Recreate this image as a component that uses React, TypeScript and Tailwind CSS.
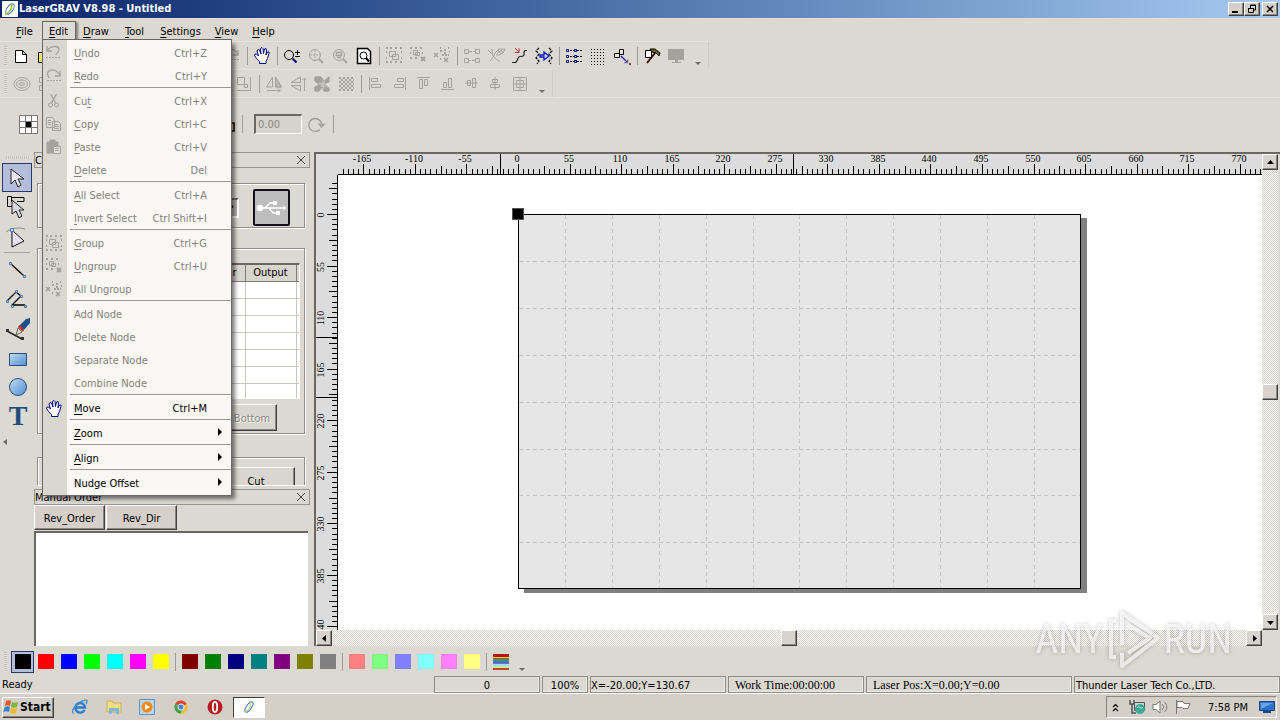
import type { ReactNode } from 'react';
import clsx from 'clsx';

const GRAY = '#a5a19b';
const NAVY = '#000080';

const raised =
  'border border-t-white border-l-white border-r-[#404040] border-b-[#404040] shadow-[inset_-1px_-1px_0_#8a867f]';
const track =
  'bg-[repeating-conic-gradient(#ffffff_0_25%,#d4d0c8_0_50%)] bg-[length:2px_2px]';

const Icon = ({ children, className }: { children: ReactNode; className?: string }) => (
  <svg
    viewBox="0 0 20 20"
    fill="none"
    stroke={GRAY}
    className={clsx('w-5 h-5 shrink-0', className)}
    aria-hidden="true"
  >
    {children}
  </svg>
);

const cross = (x: number, y: number) => `M${x} ${y}l4 4M${x + 4} ${y}l-4 4`;

const icons: Record<string, ReactNode> = {
  new: (
    <Icon>
      <path d="M3.500 4.500h7l4 4v8h-11zM10.500 4.500v4h4" stroke="#000" fill="#fff" />
    </Icon>
  ),
  open: (
    <Icon>
      <path d="M2.500 16.500v-10h4l1 2h8v8z" stroke="#000" fill="#f0e070" />
    </Icon>
  ),
  save: (
    <Icon>
      <path d="M3.500 3.500h13v13h-13zM6.500 3.500v5h7v-5M6.500 16.500v-5h7v5" />
    </Icon>
  ),
  undo: (
    <Icon>
      <path d="M3 2v5h5M3 7c3-5 11-6 12-2 0 4-3 4-3 6" strokeWidth="1.300" />
      <path d="M2 13.500h14" strokeDasharray="2 1" />
    </Icon>
  ),
  redo: (
    <Icon>
      <path d="M16 4v5h-5M16 9c-2-6-9-8-12-4-2 4 1 4 1 6" strokeWidth="1.300" />
      <path d="M3 13.500h14" strokeDasharray="2 1" />
    </Icon>
  ),
  cut: (
    <Icon>
      <path d="M6.500 2l5 9M12.500 2l-5 9" strokeWidth="1.300" />
      <circle cx="6.500" cy="13" r="2" />
      <circle cx="12.500" cy="13" r="2" />
    </Icon>
  ),
  copy: (
    <Icon>
      <path d="M2.500 2.500h6l2 2v8h-8zM8.500 6.500h6l2 2v7h-8zM4 5.500h3M4 7.500h3M4 9.500h3M10 9.500h4M10 11.500h5M10 13.500h5" />
    </Icon>
  ),
  paste: (
    <Icon>
      <path d="M3 4h3V2h5v2h3v11H3z" fill={GRAY} />
      <path d="M9.500 8.500h7v7h-7zM11 10.500h4M11 12.500h4" fill="#e2dfda" />
    </Icon>
  ),
  hand: (
    <Icon>
      <path
        d="M7.500 17.500v-2l-3-3-2-3 .5-1.500h1.500l2 2-1.500-5 1-1.500 1.500.5 1.500 4-.5-5.500 1.500-1 1 1 .5 5 1-4.500 1.500-.5.5 1.500-.5 5 1.500-3h1.500v1.500l-1.500 5-1.500 3v2z"
        fill="#fff"
        stroke={NAVY}
      />
    </Icon>
  ),
  zoom: (
    <Icon>
      <circle cx="7" cy="9" r="4.500" stroke="#000" />
      <path d="M10.500 12.500l4 4" stroke={NAVY} strokeWidth="2" />
      <path d="M13 6.500h5M15.500 4v5M13 10.500h5" stroke="#000" />
    </Icon>
  ),
  zoomAll: (
    <Icon>
      <circle cx="9" cy="9" r="5.500" />
      <path d="M13 13l4 4" strokeWidth="2" />
      <path d="M9 4v10M4 9h10" strokeDasharray="2 1" />
    </Icon>
  ),
  zoomSel: (
    <Icon>
      <circle cx="9" cy="9" r="5.500" />
      <path d="M13 13l4 4" strokeWidth="2" />
      <path d="M6.500 6.500h5v3h-5zM7 11.500h4" strokeWidth="1.500" />
    </Icon>
  ),
  zoomPage: (
    <Icon>
      <path d="M3.500 2.500h10l3 3v12h-13z" fill="#fff" stroke="#000" strokeWidth="1.500" />
      <circle cx="9.500" cy="9.500" r="3.500" stroke="#000" />
      <path d="M12 12l3 3.500" stroke="#000" strokeWidth="2" />
    </Icon>
  ),
  group: (
    <Icon>
      <path d="M2 2h2M6 2h2M11 2h2M16 2h2M2 16h2M6 16h2M11 16h2M16 16h2M2 6h1M2 12h1M17 6h1M17 12h1" strokeWidth="2" />
      <path d="M5.500 5.500h6v5h-6zM8.500 8.500h6v5h-6z" />
    </Icon>
  ),
  ungroup: (
    <Icon>
      <path d="M2 2h2M7 2h2M12 2h2M2 7h1M2 12h2M7 12h2M14 7h1" strokeWidth="2" />
      <path d="M5.500 4.500h4v4h-4zM7.500 6.500h4v3h-4z" />
      <path d={cross(13, 11)} strokeWidth="2" />
    </Icon>
  ),
  ungroupAll: (
    <Icon>
      <path d={cross(2, 7) + cross(12, 12)} strokeWidth="1.500" />
      <path d="M8 5h3M13 3v5M10 9h7M8 2h1M16 2h1M8 13h1M17 6h1" strokeWidth="2" strokeDasharray="2 1" />
    </Icon>
  ),
  nodes: (
    <Icon>
      <path d="M2.500 3.500h4v4h-4zM13.500 3.500h4v4h-4zM2.500 12.500h4v4h-4zM13.500 12.500h4v4h-4zM7 5.500h3M11 5.500h2M7 14.500h2M10 14.500h3" />
    </Icon>
  ),
  hatch: (
    <Icon>
      <path d="M2 4l4 4M6 3c0 3 0 6 2 8s5 4 6 5M4 15c3-3 4-6 6-9" />
      <path d="M10 6l3-3h6l-2 4-4 2h-3M12 4l3 4M15 4l2 3M11 7l5-3" />
    </Icon>
  ),
  smooth: (
    <Icon>
      <path d="M2 16.500h3c3 0 2-6 5-6 5 0 4-2 4-4 0-2 1-2 3-2" stroke="#222" strokeWidth="1.200" />
      <path d="M5 2l4 4M9 2.500V6.500H5" stroke="#c81020" />
    </Icon>
  ),
  convert: (
    <Icon>
      <path d="M5 2L2 5l3 3-3 4 3 3-2 3M15 2l3 3-3 3 3 4-3 3 2 3" stroke="#000" strokeWidth="1.200" strokeDasharray="3 1" />
      <path d="M6 9h4V6l5 4-5 4v-3H6z" fill="#cfd6ff" stroke="#1010c0" strokeWidth="1.300" />
    </Icon>
  ),
  list: (
    <Icon>
      <path d="M2.500 3.500h2v2h-2zM2.500 9.500h2v2h-2zM2.500 14.500h2v2h-2zM10.500 3.500h2v2h-2zM10.500 9.500h2v2h-2zM10.500 14.500h2v2h-2z" stroke={NAVY} />
      <path d="M6 4.500h4M13 4.500h5M6 10.500h4M13 10.500h5M6 15.500h4M13 15.500h5" stroke="#000" strokeDasharray="2 1" />
    </Icon>
  ),
  dots: (
    <Icon>
      <path
        d="M3 3.500h15M3 6.500h15M3 9.500h15M3 12.500h15M3 15.500h15M3 18.500h15"
        stroke="#000"
        strokeDasharray="1 2"
      />
    </Icon>
  ),
  arrange: (
    <Icon>
      <path d="M7.500 3.500h4v5h-4zM2.500 7.500h5v4h-5z" stroke="#000" fill="#e8e6e2" />
      <path d="M9 10l6 6" stroke="#1010c0" strokeWidth="1.300" />
      <path d="M16 13v4h-4z" fill="#1010c0" />
      <path d="M17 18h2" stroke="#c01030" strokeWidth="2" />
    </Icon>
  ),
  hammer: (
    <Icon>
      <path d="M3.500 4.500h6v7h-6z" fill="#fff" stroke="#000" />
      <path d="M13 7L5 17" stroke="#3a0a0a" strokeWidth="2" />
      <path d="M8 3h5l5 4-1 3-3-3-4-1z" fill="#6a6420" stroke="#000" />
    </Icon>
  ),
  monitor: (
    <Icon>
      <path d="M2 3h16v11H2zM9 14h3v2h3v1H6v-1h3z" fill={GRAY} stroke="none" />
    </Icon>
  ),
  rings: (
    <Icon>
      <ellipse cx="10" cy="10" rx="8" ry="6.500" />
      <ellipse cx="10" cy="10" rx="5.500" ry="4" />
      <ellipse cx="10" cy="10" rx="2.500" ry="1.500" />
    </Icon>
  ),
  boxes: (
    <Icon>
      <path d="M3.500 3.500h6v5h-6zM3.500 11.500h6v5h-6zM12.500 6.500h5v7h-5z" />
    </Icon>
  ),
  scale: (
    <Icon>
      <path d="M3.500 3.500h7v7h-7zM16.500 3v14M3 16.500h13M10.500 10.500h3v3h-3z" />
    </Icon>
  ),
  flipH: (
    <Icon>
      <path d="M8.500 3v10h-6zM11.500 3v10h6zM3 16.500h13M14 14.500l2 2-2 2" />
      <path d="M11.500 3v10h6z" fill="#bab6b0" />
    </Icon>
  ),
  flipV: (
    <Icon>
      <path d="M12.500 3v5.500H3zM12.500 17v-5.500H3zM16.500 17V4M14.500 6l2-2 2 2" />
    </Icon>
  ),
  invert: (
    <Icon>
      <path d="M3 3h6l3 4 5-4v4l-5 3 5 4v3h-5l-2-4-3 4H3v-4l4-2-4-4z" fill="#c4c0ba" />
      <path d="M3 3h6l1 5-5 1-2-2zM17 3v5l-4 1 1-3zM3 17v-4l5-2 1 3-2 3zM17 17h-5l1-4 4 2z" fill={GRAY} />
    </Icon>
  ),
  checker: (
    <Icon>
      <path d="M3 4h15M3 8h15M3 12h15M3 16h15" strokeWidth="2" strokeDasharray="2 2" />
      <path d="M5 6h13M5 10h13M5 14h13" strokeWidth="2" strokeDasharray="2 2" />
    </Icon>
  ),
  alignL: (
    <Icon>
      <path d="M3.500 3v13M5.500 4.500h6v3h-6zM5.500 10.500h9v3h-9z" />
    </Icon>
  ),
  alignR: (
    <Icon>
      <path d="M15.500 3v13M7.500 4.500h6v3h-6zM4.500 10.500h9v3h-9z" />
    </Icon>
  ),
  alignT: (
    <Icon>
      <path d="M3 3.500h13M5.500 5.500h3v9h-3zM10.500 5.500h3v6h-3z" />
    </Icon>
  ),
  alignB: (
    <Icon>
      <path d="M3 15.500h13M5.500 8.500h3v5h-3zM10.500 4.500h3v9h-3z" />
    </Icon>
  ),
  centerH: (
    <Icon>
      <path d="M3 9h13M5.500 6.500h3v5h-3zM10.500 4.500h3v9h-3z" fill="#dcd8d2" />
    </Icon>
  ),
  centerV: (
    <Icon>
      <path d="M9 3v13M6.500 5.500h5v3h-5zM4.500 10.500h9v3h-9z" fill="#dcd8d2" />
    </Icon>
  ),
  table: (
    <Icon>
      <path d="M3.500 3.500h13v13h-13zM3.500 10h13M10 3.500v13M6.500 6.500h7v7h-7z" />
    </Icon>
  ),
  lock: (
    <Icon>
      <path d="M6 9V6c0-4 7-4 7 0v3h5v8H4V9z" stroke="#000" strokeWidth="1.500" fill="#f0e070" />
    </Icon>
  ),
  rotate: (
    <Icon>
      <path d="M14 15.500A6.500 6.500 0 1 1 15.500 9" strokeWidth="1.500" />
      <path d="M11.500 9.500h8l-4 4.500z" fill={GRAY} stroke="none" />
    </Icon>
  ),
};

const menus = [
  { label: 'File', width: 'w-[33px]' },
  { label: 'Edit', width: 'w-[34px]' },
  { label: 'Draw', width: 'w-[40px]' },
  { label: 'Tool', width: 'w-[37px]' },
  { label: 'Settings', width: 'w-[55px]' },
  { label: 'View', width: 'w-[37px]' },
  { label: 'Help', width: 'w-[37px]' },
];

type MenuEntry = {
  label: string;
  mnemonic?: boolean;
  keys?: string;
  icon?: string;
  enabled?: boolean;
  submenu?: boolean;
};

const editMenu: MenuEntry[][] = [
  [
    { label: 'Undo', mnemonic: true, keys: 'Ctrl+Z', icon: 'undo' },
    { label: 'Redo', mnemonic: true, keys: 'Ctrl+Y', icon: 'redo' },
  ],
  [
    { label: 'Cut', keys: 'Ctrl+X', icon: 'cut' },
    { label: 'Copy', mnemonic: true, keys: 'Ctrl+C', icon: 'copy' },
    { label: 'Paste', mnemonic: true, keys: 'Ctrl+V', icon: 'paste' },
    { label: 'Delete', mnemonic: true, keys: 'Del' },
  ],
  [
    { label: 'All Select', mnemonic: true, keys: 'Ctrl+A' },
    { label: 'Invert Select', mnemonic: true, keys: 'Ctrl Shift+I' },
  ],
  [
    { label: 'Group', mnemonic: true, keys: 'Ctrl+G', icon: 'group' },
    { label: 'Ungroup', mnemonic: true, keys: 'Ctrl+U', icon: 'ungroup' },
    { label: 'All Ungroup', icon: 'ungroupAll' },
  ],
  [{ label: 'Add Node' }, { label: 'Delete Node' }, { label: 'Separate Node' }, { label: 'Combine Node' }],
  [{ label: 'Move', mnemonic: true, keys: 'Ctrl+M', icon: 'hand', enabled: true }],
  [{ label: 'Zoom', mnemonic: true, enabled: true, submenu: true }],
  [{ label: 'Align', mnemonic: true, enabled: true, submenu: true }],
  [{ label: 'Nudge Offset', enabled: true, submenu: true }],
];

// '|' is a separator
const standardBar = [
  'new', 'open', 'save', '|', 'cut', 'copy', 'paste', '|', 'boxes', '|', 'undo', 'redo', '|',
  'hand', '|', 'zoom', 'zoomAll', 'zoomSel', 'zoomPage', '|', 'group', 'ungroup', 'ungroupAll', '|',
  'nodes', 'hatch', 'smooth', 'convert', '|', 'list', 'dots', 'arrange', '|', 'hammer', 'monitor',
];

const arrangeBar = [
  'rings', 'boxes', 'group', 'ungroup', 'nodes', '|', 'rings', 'boxes', 'table', 'hatch', 'scale', '|',
  'flipH', 'flipV', 'invert', 'checker', '|',
  'alignL', 'alignR', 'alignT', 'alignB', 'centerH', 'centerV', 'table',
];

const palette = [
  ['bg-black', 'bg-[#ff0000]', 'bg-[#0000ff]', 'bg-[#00ff00]', 'bg-[#00ffff]', 'bg-[#ff00ff]', 'bg-[#ffff00]'],
  ['bg-[#800000]', 'bg-[#008000]', 'bg-[#000080]', 'bg-[#008080]', 'bg-[#800080]', 'bg-[#808000]', 'bg-[#808080]'],
  ['bg-[#ff8080]', 'bg-[#80ff80]', 'bg-[#8080ff]', 'bg-[#80ffff]', 'bg-[#ff80ff]', 'bg-[#ffff80]'],
];

const Grip = () => (
  <span className="w-[3px] h-5 ml-1 mr-[3px] shrink-0 bg-[repeating-linear-gradient(#c4c0b9_0_1px,#e6e3de_1px_2px)]" />
);

const Separator = () => (
  <span className="w-[6px] h-[18px] flex justify-center shrink-0">
    <span className="w-px bg-[#a09c95]" />
  </span>
);

const Overflow = () => (
  <span className="w-5 self-end pb-1 flex justify-center">
    <svg viewBox="0 0 6 3" className="w-[6px] h-[3px]" aria-hidden="true">
      <path d="M0 0h6L3 3z" fill="#6f6b66" />
    </svg>
  </span>
);

const ToolBar = ({ items, label }: { items: string[]; label: string }) => (
  <div
    role="toolbar"
    aria-label={label}
    className="h-7 self-start flex items-center border-t border-r border-t-[#e6e3df] border-r-[#d0ccc6]"
  >
    <Grip />
    {items.map((name, i) =>
      name === '|' ? (
        <Separator key={i} />
      ) : (
        <button key={i} aria-label={name} className="w-6 h-6 flex items-center justify-center">
          {icons[name]}
        </button>
      )
    )}
    <Overflow />
  </div>
);

const Mnemonic = ({ text, at = 0 }: { text: string; at?: number }) => (
  <span>
    {text.slice(0, at)}
    <span className="underline underline-offset-2">{text[at]}</span>
    {text.slice(at + 1)}
  </span>
);

const EditMenu = () => (
  <div
    role="menu"
    aria-label="Edit"
    className="absolute z-10 left-0 top-[18px] w-[190px] py-px border border-[#6b6763] bg-[linear-gradient(90deg,#dad6d0_24px,#faf7f5_24px)] shadow-[4px_4px_4px_-1px_rgba(0,0,0,0.5)]"
  >
    {editMenu.map((section, s) => (
      <div key={s}>
        {s > 0 && <div className="h-[2px] ml-[27px] border-t border-[#9d9a95]" />}
        {section.map((item) => (
          <button
            key={item.label}
            role="menuitem"
            disabled={!item.enabled}
            className={clsx(
              'w-full h-[23px] pt-[2px] pr-6 flex items-center relative text-left',
              item.enabled ? 'text-black' : 'text-[#85827e]'
            )}
          >
            <span className="w-[31px] pl-px shrink-0">{item.icon && icons[item.icon]}</span>
            <span className="flex-1">
              {item.label === 'Cut' ? (
                <Mnemonic text="Cut" at={2} />
              ) : item.mnemonic ? (
                <Mnemonic text={item.label} />
              ) : (
                item.label
              )}
            </span>
            {item.keys}
            {item.submenu && (
              <svg viewBox="0 0 4 8" className="absolute right-[9px] top-[7px] w-1 h-2" aria-hidden="true">
                <path d="M0 0l4 4-4 4z" />
              </svg>
            )}
          </button>
        ))}
      </div>
    ))}
  </div>
);

const MenuBar = () => (
  <nav className="h-5 pl-2 flex items-stretch">
    {menus.map(({ label, width }) => (
      <div key={label} className={clsx('relative', width, label === 'File' && 'mr-px')}>
        <button
          className={clsx(
            'w-full h-full',
            label === 'Edit'
              ? 'pr-px border border-b-0 border-[#6b6763] bg-[#dedad5] shadow-[2px_1px_2px_rgba(0,0,0,0.4)]'
              : 'pt-px'
          )}
        >
          <Mnemonic text={label} />
        </button>
        {label === 'Edit' && <EditMenu />}
      </div>
    ))}
  </nav>
);

const TitleBar = () => {
  const button = clsx('h-[14px] bg-[#d4d0c8] flex items-center justify-center', raised);
  return (
    <header className="h-[18px] px-[2px] flex items-center bg-linear-to-r from-[#0a246a] to-[#a6caf0] text-white font-bold">
      <svg viewBox="0 0 16 16" className="w-4 h-4 mr-px bg-white" aria-hidden="true">
        <ellipse cx="8" cy="8" rx="3" ry="6" transform="rotate(35 8 8)" fill="none" stroke="#2b6fd0" />
        <path d="M3 13C8 12 10 8 10 2" fill="none" stroke="#9ac83a" strokeWidth="1.500" />
      </svg>
      <h1 className="flex-1 leading-4">LaserGRAV V8.98 - Untitled</h1>
      <button aria-label="Minimize" className={clsx('w-4', button)}>
        <svg viewBox="0 0 10 10" className="w-[10px] h-[10px]">
          <path d="M1 8h6" stroke="#000" strokeWidth="2" />
        </svg>
      </button>
      <button aria-label="Restore" className={clsx('w-4', button)}>
        <svg viewBox="0 0 10 10" className="w-[10px] h-[10px]" fill="none" stroke="#000">
          <path d="M3.500 4V1h5v5H6M3 1.500h6M1 4.500h5.500M1.500 4v4.500h5V4" />
        </svg>
      </button>
      <button aria-label="Close" className={clsx('w-4 ml-[2px]', button)}>
        <svg viewBox="0 0 10 10" className="w-[10px] h-[10px]">
          <path d="M2 2l6 6M8 2L2 8" stroke="#000" strokeWidth="1.500" />
        </svg>
      </button>
    </header>
  );
};

const tools: { name: string; art: ReactNode }[] = [
  {
    name: 'Select',
    art: <path d="M7 4v15l4-4 3 7 3-2-3-6h6z" fill="#e8e8f4" stroke="#222" />,
  },
  {
    name: 'Node select',
    art: (
      <>
        <path d="M8 12.500H3.500v-10h4v5M8 3.500h12v4h-7" fill="none" stroke="#000" />
        <path d="M8 6v14l4-3 3 7 3-2-3-6h5z" fill="#d8d8e4" stroke="#222" />
      </>
    ),
  },
  {
    name: 'Shape edit',
    art: (
      <>
        <path d="M2 8c5-4 13-5 19-3" fill="none" stroke="#8a8a92" />
        <path d="M8 6v17l12-6z" fill="#e4e4f2" stroke="#111" />
        <path d="M6.500 4.500h3v3h-3z" fill="#cfe0f6" stroke="#4b7cc0" />
      </>
    ),
  },
  {
    name: 'Line',
    art: (
      <>
        <path d="M7 7l13 12" stroke="#000" strokeWidth="1.300" />
        <path d="M5.500 5.500h2v2h-2zM19.500 18.500h2v2h-2z" fill="#dcecff" stroke="#4b7cc0" />
      </>
    ),
  },
  {
    name: 'Polyline',
    art: (
      <>
        <path d="M3 14L12 5l5 4-9 9h13" fill="none" stroke="#000" strokeWidth="1.300" />
        <path d="M2.500 13.500h2v2h-2zM11.500 3.500h2v2h-2zM16.500 8.500h2v2h-2zM7.500 18.500h2v2h-2zM20.500 18.500h2v2h-2z" fill="#dcecff" stroke="#4b7cc0" />
      </>
    ),
  },
  {
    name: 'Pen',
    art: (
      <>
        <path d="M3 14l15 8" stroke="#222" strokeWidth="1.500" />
        <path d="M2 12h3v3H2zM17 20h3v3h-3z" fill="#333" />
        <path d="M12 18l2-7 4 4z" fill="#f0d8c8" stroke="#666" />
        <path d="M14 10l8-8 4-1v5l-7 8z" fill="#1d4f8c" />
        <path d="M14 10l5 5 1-3-4-4z" fill="#c03828" />
      </>
    ),
  },
  {
    name: 'Rectangle',
    art: (
      <>
        <defs>
          <linearGradient id="blue" x1="0" y1="0" x2="1" y2="1">
            <stop offset="0" stopColor="#c2dcf6" />
            <stop offset="1" stopColor="#4f8fd0" />
          </linearGradient>
        </defs>
        <path d="M5.500 7.500h17v12h-17z" fill="url(#blue)" stroke="#2a4f80" />
      </>
    ),
  },
  { name: 'Ellipse', art: <circle cx="14" cy="13" r="8.500" fill="url(#blue)" stroke="#2a4f80" /> },
  {
    name: 'Text',
    art: (
      <text x="14" y="23" textAnchor="middle" fontSize="28" fontWeight="bold" fontFamily="Liberation Serif, serif" fill="#1c4f80">
        T
      </text>
    ),
  },
];

const ToolBox = () => (
  <aside className="w-[34px] shrink-0 pt-1 pl-[2px] flex flex-col">
    <span className="h-[3px] w-6 ml-1 mb-1 bg-[repeating-linear-gradient(90deg,#c4c0b9_0_1px,#e6e3de_1px_2px)]" />
    {tools.map(({ name, art }, i) => (
      <div key={name}>
        {i === 3 && <div className="h-px w-[26px] ml-[2px] mb-[2px] bg-[#a8a49e]" />}
        <button
          aria-label={name}
          className={clsx(
            'w-[30px] flex items-center justify-center',
            i === 0 ? 'h-[29px] border border-[#26386e] bg-[#b4bedb]' : i < 6 ? 'h-[30px]' : 'h-7'
          )}
        >
          <svg viewBox="0 0 26 26" className="w-[26px] h-[26px] overflow-visible" aria-hidden="true">
            {art}
          </svg>
        </button>
      </div>
    ))}
    <svg viewBox="0 0 4 6" className="w-1 h-[6px] mt-[10px] ml-px" aria-hidden="true">
      <path d="M4 0v6L0 3z" fill="#6f6b66" />
    </svg>
  </aside>
);

const PanelTitle = ({ title }: { title: string }) => (
  <div className="h-4 shrink-0 mr-1 flex items-center justify-between border border-[#98948e] leading-4">
    <span className="pt-px">{title}</span>
    <button aria-label={`Close ${title}`} className="w-4 flex justify-center">
      <svg viewBox="0 0 8 8" className="w-2 h-2">
        <path d="M0 0l8 8M8 0L0 8" stroke="#444" />
      </svg>
    </button>
  </div>
);

const groupBox = 'ml-[3px] mr-[9px] border border-[#918d87] shadow-[inset_1px_1px_0_#fff,1px_1px_0_#fff]';

const layerRows = ['a', 'b', 'c', 'd', 'e', 'f', 'g'];

const ControlPanel = () => (
  <section className="w-[280px] shrink-0 flex flex-col">
    <PanelTitle title="Control" />
    <div className={clsx('mt-[15px] h-[45px] pt-1 pr-[14px] flex items-center justify-end gap-[14px]', groupBox)}>
      <select aria-label="Device" className="w-10 h-5 bg-[#bdb9b3] border-2 border-[#6f6b66] border-r-white border-b-white" />
      <button aria-label="USB" className="w-[37px] h-[37px] border-2 border-[#10101c] rounded-[2px] bg-[#bdbdbd] flex items-center justify-center">
        <svg viewBox="0 0 32 16" className="w-8 h-4" fill="none" stroke="#fff" strokeWidth="1.500">
          <path d="M3 8h25M9 8l5-5h4M13 8l4 5h4" />
          <circle cx="4" cy="8" r="2.500" fill="#fff" />
          <circle cx="19" cy="3" r="1.500" fill="#fff" />
          <path d="M20 11h4v4h-4zM27 6l4 2-4 2z" fill="#fff" stroke="none" />
        </svg>
      </button>
    </div>
    <div className={clsx('mt-5 h-[186px] pt-[14px] px-1', groupBox)}>
      <div className="h-[136px] border-t-2 border-l-2 border-t-[#6b6763] border-l-[#6b6763] border-r border-b border-r-white border-b-white bg-white overflow-hidden">
        <table className="w-full table-fixed border-collapse">
          <thead>
            <tr className="h-4 bg-[#d9d5cf] leading-4">
              <th className="w-[70px] p-0 border-r border-b border-[#807c76]" />
              <th className="w-[70px] p-0 border-r border-b border-[#807c76]" />
              <th className="p-0 pr-2 font-normal text-right border-r border-b border-[#807c76]">Power</th>
              <th className="w-[51px] p-0 font-normal border-r border-b border-[#807c76]">Output</th>
              <th className="w-[3px] p-0 border-b border-[#807c76]" />
            </tr>
          </thead>
          <tbody>
            {layerRows.map((row) => (
              <tr key={row} className="h-[17px]">
                <td className="p-0 border-r border-b border-[#c9c5bf]" />
                <td className="p-0 border-r border-b border-[#c9c5bf]" />
                <td className="p-0 border-r border-b border-[#c9c5bf]" />
                <td className="p-0 border-r border-b border-[#c9c5bf]" />
                <td className="p-0 border-b border-[#c9c5bf]" />
              </tr>
            ))}
          </tbody>
        </table>
      </div>
      <div className="mt-[5px] pr-[23px] flex justify-end">
        <button disabled className={clsx('w-[50px] h-[27px] pt-[2px] bg-[#d9d5cf] text-[#8f8b86] [text-shadow:1px_1px_0_#fff]', raised)}>
          Bottom
        </button>
      </div>
    </div>
    <div className={clsx('mt-[23px] h-7 pt-[9px] pr-[9px] flex justify-end overflow-hidden border-b-0', groupBox)}>
      <button className={clsx('w-[78px] h-[27px] pt-[2px] shrink-0 bg-[#d9d5cf]', raised)}>Cut</button>
    </div>
    <div className="mt-1 flex flex-col flex-1">
      <PanelTitle title="Manual Order" />
      <div className="flex gap-px">
        <button className={clsx('w-[71px] h-[25px] pt-[2px] bg-[#d6cfca]', raised)}>Rev_Order</button>
        <button className={clsx('w-[71px] h-[25px] pt-[2px] bg-[#d6cfca]', raised)}>Rev_Dir</button>
      </div>
      <div className="flex-1 min-h-24 mt-px mr-[6px] bg-white border-t-2 border-l-2 border-[#6b6763]" />
    </div>
  </section>
);

// pixels between two small ticks; ten of them make one 55 mm step
const TICK = 5.155;

const Ruler = ({ vertical, zero, marks }: { vertical?: boolean; zero: number; marks: number[] }) => {
  const length = vertical ? window.innerHeight - 264 : window.innerWidth - 356;
  const count = Math.floor(length / TICK) + 1;
  const ticks = Array.from({ length: count }, (_, i) => i - Math.floor((zero - 3) / TICK)).filter(
    (i) => zero + i * TICK < length
  );
  const edge = vertical ? 22 : 21;
  const size = (i: number) => (i % 10 === 0 ? 11 : i % 5 === 0 ? 9 : 6);
  return (
    <svg
      className={clsx('bg-[#dcdcdc] overflow-hidden', vertical ? 'w-[22px] shrink-0' : 'flex-1 min-w-0 h-[21px]')}
      shapeRendering="crispEdges"
      role="img"
      aria-label={vertical ? 'Vertical ruler' : 'Horizontal ruler'}
    >
      {ticks.map((i) => {
        const p = Math.round(zero + i * TICK);
        return vertical ? (
          <rect key={i} x={edge - size(i)} y={p} width={size(i)} height="1" />
        ) : (
          <rect key={i} x={p} y={edge - size(i)} width="1" height={size(i)} />
        );
      })}
      {ticks
        .filter((i) => i % 10 === 0)
        .map((i) => {
          const p = Math.round(zero + i * TICK);
          return (
            <text
              key={i}
              x={vertical ? 0 : p - 1}
              y={vertical ? 0 : 8}
              transform={vertical ? `translate(8 ${p + 1}) rotate(-90)` : undefined}
              textAnchor="middle"
              fontSize="10"
              fontFamily="Liberation Serif, serif"
            >
              {(i / 10) * 55}
            </text>
          );
        })}
      {marks.map((m) =>
        vertical ? (
          <rect key={m} x="0" y={m} width="22" height="1" />
        ) : (
          <rect key={m} x={m} y="0" width="1" height="21" />
        )
      )}
      {vertical ? (
        <rect x="21" y="0" width="1" height="100%" />
      ) : (
        <rect x="0" y="20" width="100%" height="1" />
      )}
    </svg>
  );
};

const Canvas = () => {
  const cell = 46.9;
  return (
    <svg className="flex-1 min-w-0 bg-white" shapeRendering="crispEdges" role="img" aria-label="Work area">
      <rect x="186" y="43" width="563" height="375" fill="#808080" />
      <rect x="180.500" y="39.500" width="562" height="374" fill="#e6e6e6" stroke="#000" />
      <g stroke="#c6c6c6" strokeDasharray="4 3">
        {Array.from({ length: 11 }, (_, i) => Math.round(180 + (i + 1) * cell) + 0.5).map((x) => (
          <path key={x} d={`M${x} 40v373`} />
        ))}
        {Array.from({ length: 7 }, (_, i) => Math.round(39 + (i + 1) * cell) + 0.5).map((y) => (
          <path key={y} d={`M181 ${y}h561`} />
        ))}
      </g>
      <rect x="174.500" y="33.500" width="11" height="11" fill="#000" stroke="#555" />
    </svg>
  );
};

const arrowPaths = {
  up: 'M1 6h7L4.500 2z',
  down: 'M1 3h7L4.500 7z',
  left: 'M6 1v7L2 4.500z',
  right: 'M3 1v7l4-3.500z',
};

const ScrollButton = ({ dir }: { dir: keyof typeof arrowPaths }) => (
  <button aria-label={`Scroll ${dir}`} className={clsx('w-4 h-4 shrink-0 bg-[#d8d4cd] flex items-center justify-center', raised)}>
    <svg viewBox="0 0 9 9" className="w-[9px] h-[9px]">
      <path d={arrowPaths[dir]} />
    </svg>
  </button>
);

const Workspace = () => (
  <section className="flex-1 min-w-0 flex border-t-2 border-l-2 border-[#6b6763] pr-[2px]">
    <div className="flex-1 min-w-0 flex flex-col">
      <div className="flex">
        <div className="w-[22px] shrink-0 bg-[#dcdcdc]" />
        <Ruler zero={180} marks={[162, 455]} />
      </div>
      <div className="flex-1 flex">
        <Ruler vertical zero={39} marks={[162, 222]} />
        <Canvas />
      </div>
      <div className={clsx('h-4 flex', track)}>
        <ScrollButton dir="left" />
        <div className="flex-1 flex justify-center">
          <div className={clsx('w-4 h-4 bg-[#d8d4cd]', raised)} />
        </div>
        <ScrollButton dir="right" />
      </div>
    </div>
    <div className="w-4 flex flex-col">
      <ScrollButton dir="up" />
      <div className={clsx('flex-1 flex items-center', track)}>
        <div className={clsx('w-4 h-4 bg-[#d8d4cd]', raised)} />
      </div>
      <ScrollButton dir="down" />
      <div className="h-4 bg-[#dcd8d2]" />
    </div>
  </section>
);

const Palette = () => (
  <div role="toolbar" aria-label="Layer colours" className="h-[29px] pt-[2px] self-start flex items-center">
    <span className="w-[3px] h-5 ml-1 mr-1 bg-[repeating-linear-gradient(#c4c0b9_0_1px,#e6e3de_1px_2px)]" />
    {palette.map((colors, g) => (
      <div key={g} className="flex items-center">
        {colors.map((color) => (
          <button
            key={color}
            aria-label={color}
            className={clsx(
              'w-[23px] h-[22px] flex items-center justify-center',
              color === 'bg-black' && 'border border-[#26386e] bg-[#b4bedb]'
            )}
          >
            <span className={clsx('w-4 h-[15px]', color)} />
          </button>
        ))}
        <Separator />
      </div>
    ))}
    <button aria-label="Layers" className="w-[23px] flex justify-center">
      <span className="w-4 h-4 bg-[linear-gradient(#b01818_0_3px,#e8d040_3px_4px,#c84818_4px_5px,#28a060_5px_7px,#3878c8_7px_9px,#8860d0_9px_10px,#a0e0f0_10px_12px,#c8e8a0_12px_14px,#b84828_14px_16px)]" />
    </button>
    <Overflow />
  </div>
);

const StatusBar = () => {
  const cell = 'h-[17px] border border-[#8f8b85] shadow-[inset_-1px_-1px_0_#eceae6] leading-[17px] whitespace-nowrap';
  return (
    <footer className="h-[19px] flex gap-[2px] items-center border-b border-white">
      <span className="flex-1 pl-[2px] pt-px leading-4">Ready</span>
      <span className={clsx(cell, 'w-[106px] text-center')}>0</span>
      <span className={clsx(cell, 'w-[46px] text-center')}>100%</span>
      <span className={clsx(cell, 'w-[136px]')}>X=-20.00;Y=130.67</span>
      <span className={clsx(cell, "w-[136px] pl-[6px] text-[12px] leading-4 font-['Liberation_Serif',serif]")}>
        Work Time:00:00:00
      </span>
      <span className={clsx(cell, "w-[206px] pl-[6px] text-[12px] leading-4 font-['Liberation_Serif',serif]")}>
        Laser Pos:X=0.00;Y=0.00
      </span>
      <span className={clsx(cell, 'w-[206px] pl-px')}>Thunder Laser Tech Co.,LTD.</span>
    </footer>
  );
};

const TaskBar = () => (
  <footer className="h-[26px] pl-[2px] pr-[3px] flex items-center bg-[#d5cfc8]">
    <button className={clsx('w-[52px] h-[21px] flex items-center gap-px font-bold text-xs bg-[#d4d0c8]', raised)}>
      <svg viewBox="0 0 16 16" className="w-4 h-4 shrink-0" aria-hidden="true">
        <path d="M3 2c2-1 3-1 5 0L7 7C5 6 4 6 2 7z" fill="#e0582a" />
        <path d="M9 3c2 1 4 1 6 0l-1 5c-2 1-4 1-6 0z" fill="#7cb83c" />
        <path d="M2 8c2-1 3-1 5 0l-1 5c-2-1-4-1-6 0z" fill="#3c80d8" />
        <path d="M8 9c2 1 4 1 6 0l-1 5c-2 1-4 1-6 0z" fill="#f0b828" />
      </svg>
      Start
    </button>
    <div className="ml-[9px] flex items-center">
      <button aria-label="Internet Explorer" className="w-[34px] flex justify-center">
        <svg viewBox="0 0 16 16" className="w-4 h-4" fill="none">
          <path d="M12.500 11A4.800 4.800 0 1 1 13 8.500H4" stroke="#2a7fd4" strokeWidth="2.400" />
          <path d="M2 14.500C-1 14 0 10 5 5.500S15 0 15 2c0 1 0 2-1 3" stroke="#3a8ad8" strokeWidth="1.200" />
        </svg>
      </button>
      <button aria-label="Explorer" className="w-[33px] flex justify-center">
        <svg viewBox="0 0 16 16" className="w-4 h-4">
          <path d="M1 2h5l1 2h8v9H1z" fill="#f3dd86" stroke="#cfae50" />
          <path d="M3 15V9h10v6h-3v-3H6v3z" fill="#7cb8e4" />
        </svg>
      </button>
      <button aria-label="Media Player" className="w-[34px] flex justify-center">
        <svg viewBox="0 0 16 16" className="w-4 h-4">
          <path d="M.5.5h15v15H.5z" fill="#b8d4ee" stroke="#5c94cc" />
          <circle cx="8" cy="8" r="5.500" fill="#f08a18" />
          <path d="M6 5l5 3-5 3z" fill="#fff" />
        </svg>
      </button>
      <button aria-label="Chrome" className="w-[34px] flex justify-center">
        <svg viewBox="0 0 16 16" className="w-[14px] h-[14px]">
          <circle cx="8" cy="8" r="7.500" fill="#f0c030" />
          <path d="M8 8L1.500 4.200A7.500 7.500 0 0 1 14.500 4.500z" fill="#dc4434" />
          <path d="M1.500 4.200A7.500 7.500 0 0 0 8 15.500L9.500 9z" fill="#44a050" />
          <circle cx="8" cy="8" r="3.500" fill="#4484e8" stroke="#fff" />
        </svg>
      </button>
      <button aria-label="Opera" className="w-[33px] flex justify-center">
        <svg viewBox="0 0 16 16" className="w-4 h-4">
          <circle cx="8" cy="8" r="7.500" fill="#b81c20" />
          <ellipse cx="8" cy="8" rx="2.200" ry="5" fill="#b81c20" stroke="#fff" strokeWidth="1.800" />
        </svg>
      </button>
    </div>
    <button aria-label="LaserGRAV" className="w-8 h-[21px] ml-[2px] bg-white border border-t-[#404040] border-l-[#404040] border-white flex items-center justify-center">
      <svg viewBox="0 0 16 16" className="w-4 h-4">
        <ellipse cx="8" cy="8" rx="2.500" ry="6" transform="rotate(35 8 8)" fill="none" stroke="#2b6fd0" />
        <path d="M3 13C8 12 10 8 9 2" fill="none" stroke="#b8c83a" />
      </svg>
    </button>
    <div className="ml-auto w-[171px] h-[22px] pl-1 pr-px flex items-center justify-between border border-t-[#8a867f] border-l-[#8a867f] border-white">
      <button aria-label="Show hidden icons">
        <svg viewBox="0 0 9 9" className="w-[9px] h-[9px]" fill="none" stroke="#000" strokeWidth="1.200">
          <path d="M2 4l2.500-2.500L7 4M2 8l2.500-2.500L7 8" />
        </svg>
      </button>
      <svg viewBox="0 0 16 16" className="w-4 h-4 ml-1" role="img" aria-label="Network">
        <path d="M5.500 3.500h10v8h-10z" fill="#c8dce0" stroke="#555" />
        <circle cx="11" cy="10" r="5" fill="#3ca898" />
        <path d="M8 9c2-3 4 2 6-1" fill="none" stroke="#c8f0e0" />
        <path d="M1 1v4h4V1M3 5v9h4" fill="none" stroke="#555" strokeWidth="1.500" />
      </svg>
      <svg viewBox="0 0 16 16" className="w-4 h-4 ml-[2px]" fill="#fff" stroke="#777" role="img" aria-label="Volume">
        <path d="M1 5.500h3L8 2v12l-4-3.500H1z" />
        <path d="M10 5c2 2 2 4 0 6M12.500 3c3 3 3 7 0 10" fill="none" />
      </svg>
      <svg viewBox="0 0 16 16" className="w-4 h-4 ml-[2px]" fill="#fff" stroke="#777" role="img" aria-label="Action center">
        <path d="M1.500 1v14M2 2.500h6l1 2h6l-2 5H8l-1-1H2z" />
      </svg>
      <time className="pl-3 pr-[6px] pt-px">7:58 PM</time>
      <svg viewBox="0 0 16 14" className="w-4 h-[14px]" role="img" aria-label="Desktop">
        <path d="M.5 1.500h15v9H.5z" fill="#2f70c8" stroke="#184888" />
        <path d="M2 3h12L2 9z" fill="#68a4ea" />
        <path d="M4 12h8" stroke="#184888" strokeWidth="2" />
      </svg>
    </div>
  </footer>
);

const Watermark = () => (
  <div className="absolute right-12 bottom-[49px] h-[62px] flex items-center gap-[2px] pointer-events-none text-white/70 drop-shadow-[0_0_2px_rgba(0,0,0,0.35)] text-[40px] leading-none font-['Liberation_Sans_Narrow','Roboto_Condensed','Liberation_Sans',sans-serif]">
    ANY
    <svg viewBox="0 0 56 62" className="w-14 h-[62px]" fill="none" stroke="currentColor" strokeWidth="4" strokeLinejoin="round" aria-hidden="true">
      <path d="M10 12H5v36h5M16 36V4l36 25-36 28V44M22 16l22 13-22 15" />
    </svg>
    RUN
  </div>
);

export default function App() {
  return (
    <div className="relative min-h-screen flex flex-col bg-[#dcd8d2] text-black text-[11px] leading-[14px] font-['DejaVu_Sans_Condensed','DejaVu_Sans',sans-serif]">
      <TitleBar />
      <div className="h-[3px] border-t border-[#e8dcd0]" />
      <MenuBar />
      <ToolBar items={standardBar} label="Standard" />
      <ToolBar items={arrangeBar} label="Arrange" />
      <div className="h-[55px] pb-[2px] pl-[19px] flex items-center border-t border-[#e6e3df]">
        <svg viewBox="0 0 19 19" className="w-[19px] h-[19px]" role="img" aria-label="Anchor point">
          <path d="M.5.5h18v18H.5zM6.500.5v18M12.500.5v18M.5 6.500h18M.5 12.500h18" fill="#fff" stroke="#777" />
          <path d="M7 7h5v5H7z" />
        </svg>
        <span className="ml-[178px]">{icons.lock}</span>
        <span className="w-3 flex justify-center">
          <Separator />
        </span>
        <input
          aria-label="Rotation"
          disabled
          defaultValue="0.00"
          className="ml-[6px] w-12 h-5 px-[2px] bg-[#d6d2cc] text-[#8a8680] text-[11px] border border-t-2 border-l-2 border-t-[#6b6763] border-l-[#6b6763] border-white"
        />
        <button aria-label="Rotate" className="w-7 flex justify-center">
          {icons.rotate}
        </button>
        <Separator />
      </div>
      <main className="flex-1 flex">
        <ToolBox />
        <ControlPanel />
        <Workspace />
      </main>
      <Palette />
      <StatusBar />
      <TaskBar />
      <Watermark />
    </div>
  );
}
